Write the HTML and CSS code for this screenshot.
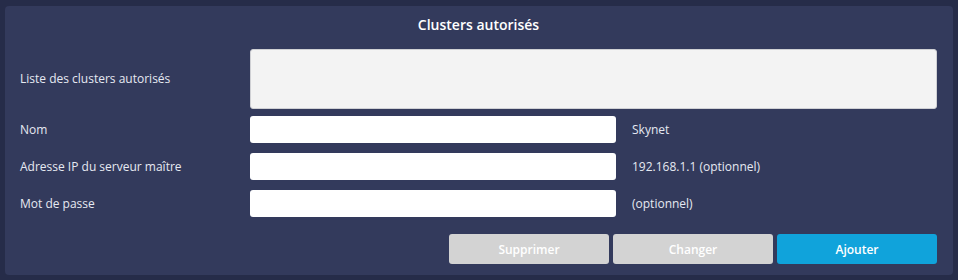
FILE: index.html
```html
<!DOCTYPE html>
<html lang="fr">
<head>
<meta charset="utf-8">
<title>Clusters autorisés</title>
<link rel="stylesheet" href="styles.css">
</head>
<body>
<div class="panel">
  <div class="title">Clusters autorisés</div>
  <div class="row row-list">
    <label class="label">Liste des clusters autorisés</label>
    <div class="list"></div>
  </div>
  <div class="row">
    <label class="label">Nom</label>
    <input class="field" type="text">
    <span class="hint">Skynet</span>
  </div>
  <div class="row">
    <label class="label">Adresse IP du serveur maître</label>
    <input class="field" type="text">
    <span class="hint">192.168.1.1 (optionnel)</span>
  </div>
  <div class="row">
    <label class="label">Mot de passe</label>
    <input class="field" type="password">
    <span class="hint">(optionnel)</span>
  </div>
  <div class="actions">
    <button class="btn btn-disabled">Supprimer</button>
    <button class="btn btn-disabled">Changer</button>
    <button class="btn btn-primary">Ajouter</button>
  </div>
</div>
</body>
</html>
```
FILE: styles.css
```css
html, body {
  margin: 0;
  padding: 0;
}
body {
  background: #262c49;
  font-family: "Open Sans", "DejaVu Sans", sans-serif;
  font-size: 12px;
  color: #e6e9f2;
  width: 958px;
  height: 280px;
  padding-top: 6px;
  box-sizing: border-box;
}
.panel {
  margin: 0 5px;
  width: 948px;
  box-sizing: border-box;
  background: #333a5c;
  border-radius: 4px;
  padding: 9px 16px 11px 15px;
}
.title {
  text-align: center;
  font-size: 14px;
  font-weight: 600;
  line-height: 20px;
  color: #ffffff;
  margin-bottom: 14px;
}
.row {
  display: flex;
  align-items: center;
  margin-top: 10px;
}
.row-list {
  margin-top: 0;
  margin-bottom: -3px;
}
.label {
  width: 230px;
  flex: none;
  line-height: 16px;
}
.list {
  flex: 1;
  height: 60px;
  box-sizing: border-box;
  background: #f3f3f3;
  border: 1px solid #cfd0d4;
  border-radius: 3px;
}
.field {
  width: 366px;
  height: 27px;
  flex: none;
  box-sizing: border-box;
  border: none;
  border-radius: 3px;
  background: #ffffff;
  margin: 0;
  padding: 0 6px;
  font-family: inherit;
  font-size: 12px;
}
.hint {
  margin-left: 16px;
  line-height: 16px;
}
.actions {
  display: flex;
  justify-content: flex-end;
  gap: 4px;
  margin-top: 17px;
}
.btn {
  width: 160px;
  height: 30px;
  border: none;
  border-radius: 3px;
  font-family: inherit;
  font-size: 12px;
  font-weight: 600;
  color: #ffffff;
  padding: 0;
  margin: 0;
}
.btn-disabled {
  background: #d3d3d3;
}
.btn-primary {
  background: #10a3db;
}
```
